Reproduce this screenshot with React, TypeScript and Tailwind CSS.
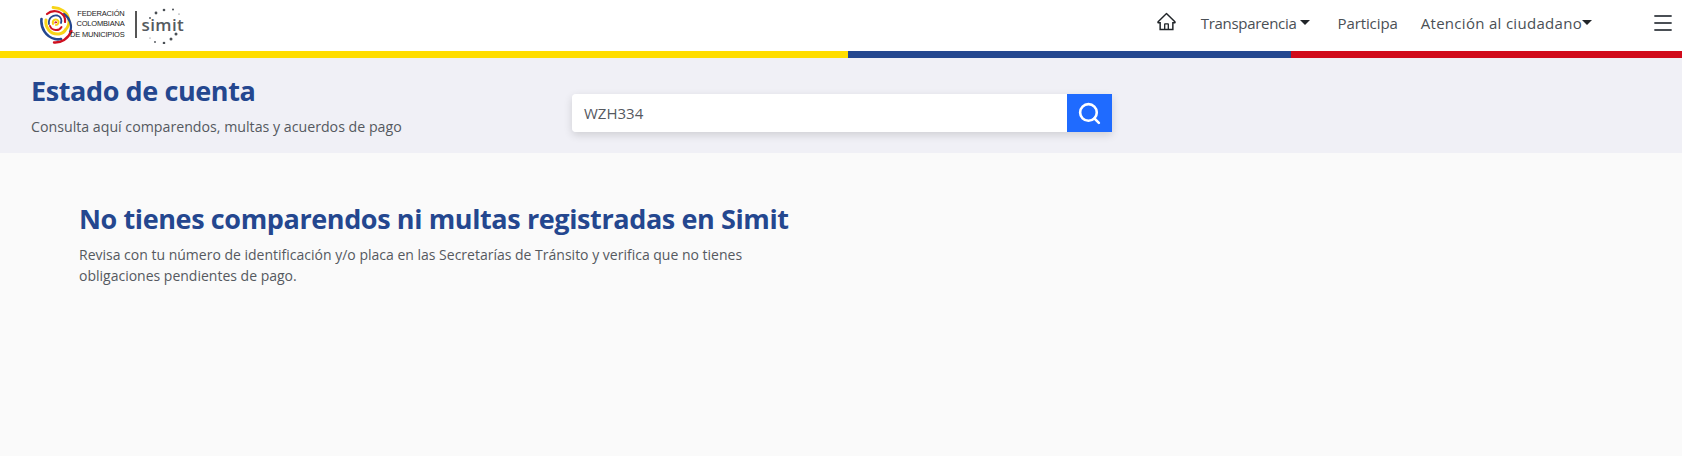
import { Menu, Search } from 'lucide-react'
import { AiOutlineHome } from 'react-icons/ai'

// ── Logo ──────────────────────────────────────────────────────────────────────
function SpiralMark() {
  return (
    <svg width="33" height="38" viewBox="0 0 33 38" fill="none" strokeLinecap="round" className="shrink-0">
      {/* outer arms */}
      <path d="M13 1.500C21 2 27 6 28.500 12C29.500 16 29 19 27 22" stroke="#f7d417" strokeWidth="2.800" />
      <path d="M24 8C30 12 32.500 20 30 26" stroke="#24478f" strokeWidth="2.200" />
      <path d="M1.500 13C0.500 22 6 31 15 33C17 33.500 19 33.500 21 33" stroke="#24478f" strokeWidth="2.600" />
      <path d="M14 36.500C21 37 28 33 31.500 25" stroke="#cf1020" strokeWidth="2.400" />
      {/* inner rings */}
      <path d="M7 8C12 3.500 20 4.500 24 10C25 12 25.500 14 25 16" stroke="#cf1020" strokeWidth="2.200" />
      <path d="M6 14C5 21 10 29 19 28C22 27.500 24.500 26 26 23" stroke="#f7d417" strokeWidth="3" />
      <path d="M9 18C8 12 13 8.500 17.500 9.500C21 10.500 22 14 21 17" stroke="#24478f" strokeWidth="1.800" />
      <path d="M10 20C12 25 19 25.500 21.500 21" stroke="#cf1020" strokeWidth="2" />
      <path d="M13 18C12 14.500 15 12.500 17.500 14C19.500 15.500 18.500 19 16 19" stroke="#f7d417" strokeWidth="2" />
      <path d="M15 17C15 16 16 15.500 16.500 16.500" stroke="#cf1020" strokeWidth="1.200" />
    </svg>
  )
}

function SimitLogo() {
  return (
    <span className="relative flex h-[38px] w-[42px] items-center">
      <span className="text-[17px] font-semibold leading-none tracking-[0.4px] text-[#555b60]">simit</span>
      {/* dots circling the wordmark */}
      <svg width="42" height="38" viewBox="0 0 42 38" className="absolute left-0 top-0" fill="#4a4f55">
        <circle cx="14" cy="7" r="1.400" />
        <circle cx="22" cy="4" r="1.300" />
        <circle cx="31" cy="3.500" r="1" />
        <circle cx="37" cy="8" r="0.600" />
        <circle cx="8" cy="12" r="0.900" />
        <circle cx="34" cy="28" r="1.500" />
        <circle cx="29" cy="33" r="1.500" />
        <circle cx="22" cy="37" r="1.300" />
        <circle cx="13" cy="36" r="0.900" />
        <circle cx="8" cy="32" r="0.500" />
      </svg>
    </span>
  )
}

function Logo() {
  return (
    <div className="mb-[2px] flex items-center pl-10">
      <SpiralMark />
      <div className="ml-[-3px] whitespace-nowrap text-right font-['Liberation_Sans',sans-serif] text-[7.500px] leading-[10.500px] tracking-[-0.2px] text-[#222]">
        <div>FEDERACIÓN</div>
        <div>COLOMBIANA</div>
        <div>DE MUNICIPIOS</div>
      </div>
      <div className="ml-[10px] mr-[5px] h-[27px] w-[2px] bg-[#555]" />
      <SimitLogo />
    </div>
  )
}

// ── Nav ───────────────────────────────────────────────────────────────────────
function Caret({ className = 'ml-[3px]' }: { className?: string }) {
  return <span className={`${className} mt-[-3px] h-0 w-0 border-x-[5px] border-t-[5px] border-x-transparent border-t-[#212529]`} />
}

function Header() {
  return (
    <header className="flex h-[51px] items-center justify-between bg-white">
      <Logo />
      <nav className="mb-[4px] flex items-center text-[15px] text-[#4a4f55]">
        <AiOutlineHome size={21} className="mb-[5px] text-[#212529]" />
        <a className="ml-[24px] flex items-center tracking-[-0.3px]">Transparencia<Caret /></a>
        <a className="ml-[28px] tracking-[-0.1px]">Participa</a>
        <a className="ml-[23px] flex items-center tracking-[0.3px]">Atención al ciudadano<Caret className="ml-0" /></a>
        <Menu size={24} strokeWidth={1.800} className="mb-[1px] ml-[59px] mr-[7px] text-[#4a4f55]" />
      </nav>
    </header>
  )
}

// ── Page ──────────────────────────────────────────────────────────────────────
export default function App() {
  return (
    <div className="flex h-[456px] flex-col bg-[#fafafa] font-['Open_Sans',sans-serif]">
      <Header />

      {/* Flag stripe */}
      <div className="flex h-[7px]">
        <div className="w-[848px] bg-[#ffdd00]" />
        <div className="w-[443px] bg-[#24478f]" />
        <div className="flex-1 bg-[#d10a1b]" />
      </div>

      {/* Title band with search */}
      <section className="flex h-[95px] items-start bg-[#f0f0f6] pl-[31px]">
        <div className="w-[541px]">
          <h1 className="mt-[15px] text-[27px] font-bold leading-[36px] tracking-[-0.4px] text-[#24478f]">Estado de cuenta</h1>
          <p className="mt-[8px] text-[14.200px] leading-5 text-[#55595f]">Consulta aquí comparendos, multas y acuerdos de pago</p>
        </div>
        <div className="mt-[36px] flex h-[38px] w-[540px] overflow-hidden rounded-l shadow-[0_3px_8px_rgba(0,0,0,0.14)]">
          <div className="flex flex-1 items-center bg-white pl-[12px] text-[15px] text-[#55595f]">WZH334</div>
          <button className="flex w-[45px] items-center justify-center bg-[#1f6bff] text-white">
            <Search size={25} strokeWidth={2.500} />
          </button>
        </div>
      </section>

      {/* Empty result */}
      <main className="pl-[79px] pt-[48px]">
        <h2 className="text-[27px] font-bold leading-[36px] tracking-[-0.39px] text-[#24478f]">No tienes comparendos ni multas registradas en Simit</h2>
        <p className="mt-[7px] w-[720px] text-[14px] leading-[21px] text-[#55595f]">
          Revisa con tu número de identificación y/o placa en las Secretarías de Tránsito y verifica que no tienes obligaciones pendientes de pago.
        </p>
      </main>
    </div>
  )
}
